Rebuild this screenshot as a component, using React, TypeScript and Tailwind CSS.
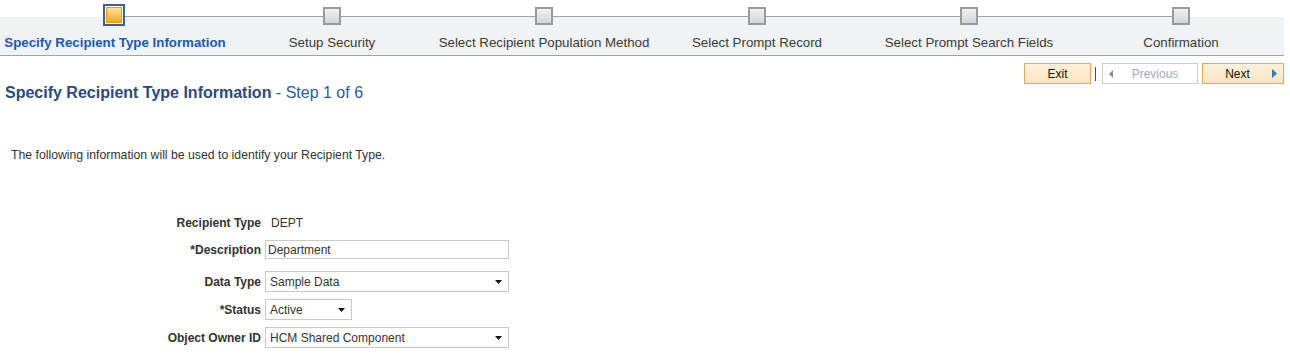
import React from "react";

type Step = { label: string; w: string; active?: boolean };

const steps: Step[] = [
  { label: "Specify Recipient Type Information", w: "w-[230px]", active: true },
  { label: "Setup Security", w: "w-[204px]" },
  { label: "Select Recipient Population Method", w: "w-[220px]" },
  { label: "Select Prompt Record", w: "w-[206px]" },
  { label: "Select Prompt Search Fields", w: "w-[218px]" },
  { label: "Confirmation", w: "w-[206px]" },
];

function StepCol({ step, first, last }: { step: Step; first: boolean; last: boolean }) {
  return (
    <div className={`${step.w} flex flex-col items-center`}>
      <div className="relative h-[35px] w-full">
        {!first && <div className="absolute left-0 right-1/2 top-[16px] h-px bg-[#a3a3a3]" />}
        {!last && <div className="absolute left-1/2 right-0 top-[16px] h-px bg-[#a3a3a3]" />}
        {step.active ? (
          <div className="absolute left-1/2 top-[4px] -ml-[12px] h-[22px] w-[22px] border-2 border-[#3d6189] bg-white p-px">
            <div className="h-full w-full border border-[#f39a00] bg-[linear-gradient(to_bottom,#fde0a0,#f8a824)]" />
          </div>
        ) : (
          <div className="absolute left-1/2 top-[7px] -ml-[9px] h-[18px] w-[18px] border-2 border-[#9b9b9b] bg-[linear-gradient(to_bottom,#f0f0f3,#d3d4da)]" />
        )}
      </div>
      <div
        className={
          step.active
            ? "whitespace-nowrap text-[13.3px] leading-[15px] font-bold text-[#1f5aa7]"
            : "whitespace-nowrap text-[13.3px] leading-[15px] text-[#3a3a3a]"
        }
      >
        {step.label}
      </div>
    </div>
  );
}

function Caret() {
  return (
    <svg width="7" height="4" viewBox="0 0 7 4" className="shrink-0">
      <path d="M0 0H7L3.5 4Z" fill="#111" />
    </svg>
  );
}

function SelectBox({ value, w }: { value: string; w: string }) {
  return (
    <div className={`${w} flex h-[21px] items-center justify-between border border-[#c9c9c9] bg-white pl-[4px] pr-[6px] text-[12px] text-[#333]`}>
      <span>{value}</span>
      <Caret />
    </div>
  );
}

function Label({ children }: { children: React.ReactNode }) {
  return <div className="w-[261px] text-right text-[12px] font-bold text-[#333]">{children}</div>;
}

export default function App() {
  return (
    <div className="w-[1290px] h-[355px] bg-white font-['Liberation_Sans',Arial,sans-serif]">
      {/* Stepper */}
      <div className="flex h-[56px] w-[1284px] border-b border-[#a3a3a3] bg-[linear-gradient(to_bottom,#ffffff_17px,#eff3f5_17px)]">
        {steps.map((s, i) => (
          <StepCol key={s.label} step={s} first={i === 0} last={i === steps.length - 1} />
        ))}
      </div>

      {/* Buttons */}
      <div className="mt-[7px] flex w-[1284px] items-center justify-end text-[12px]">
        <div className="flex h-[21px] w-[67px] items-center justify-center border border-[#e2a866] bg-[linear-gradient(to_bottom,#fdf1dc,#fbe4c0)] text-[#111]">
          Exit
        </div>
        <div className="ml-[4px] h-[14px] w-px bg-[#3a4b8c]" />
        <div className="ml-[6px] flex h-[21px] w-[96px] items-center border border-[#cccccc] bg-white pl-[6px] text-[#a3abbd]">
          <svg width="4" height="8" viewBox="0 0 4 8" className="shrink-0">
            <path d="M4 0V8L0 4Z" fill="#8c8c8c" />
          </svg>
          <span className="flex-1 text-center">Previous</span>
        </div>
        <div className="ml-[4px] flex h-[21px] w-[82px] items-center border border-[#e2a866] bg-[linear-gradient(to_bottom,#fdf1dc,#fbe4c0)] pr-[6px] text-[#111]">
          <span className="flex-1 text-center">Next</span>
          <svg width="5" height="9" viewBox="0 0 5 9" className="shrink-0">
            <path d="M0 0L5 4.5L0 9Z" fill="#3f72b5" />
          </svg>
        </div>
      </div>

      {/* Title */}
      <div className="h-[18px] pl-[5px] text-[16px] leading-[18px] text-[#2d4a78]">
        <span className="font-bold">Specify Recipient Type Information</span>
        <span className="text-[#36598a]"> - Step 1 of 6</span>
      </div>

      {/* Instructions */}
      <div className="mt-[46px] pl-[11px] text-[12.25px] leading-[14px] text-[#333]">
        The following information will be used to identify your Recipient Type.
      </div>

      {/* Form */}
      <div className="mt-[50px] flex flex-col">
        <div className="flex h-[21px] items-center gap-[4px]">
          <Label>Recipient Type</Label>
          <div className="pl-[6px] text-[12px] text-[#333]">DEPT</div>
        </div>
        <div className="mt-[6px] flex h-[21px] items-center gap-[4px]">
          <Label>*Description</Label>
          <div className="flex h-[19px] w-[244px] items-center border border-[#c9c9c9] bg-white pl-[2px] text-[12px] text-[#333]">
            Department
          </div>
        </div>
        <div className="mt-[11px] flex h-[21px] items-center gap-[4px]">
          <Label>Data Type</Label>
          <SelectBox value="Sample Data" w="w-[244px]" />
        </div>
        <div className="mt-[7px] flex h-[21px] items-center gap-[4px]">
          <Label>*Status</Label>
          <SelectBox value="Active" w="w-[87px]" />
        </div>
        <div className="mt-[7px] flex h-[21px] items-center gap-[4px]">
          <Label>Object Owner ID</Label>
          <SelectBox value="HCM Shared Component" w="w-[244px]" />
        </div>
      </div>
    </div>
  );
}
